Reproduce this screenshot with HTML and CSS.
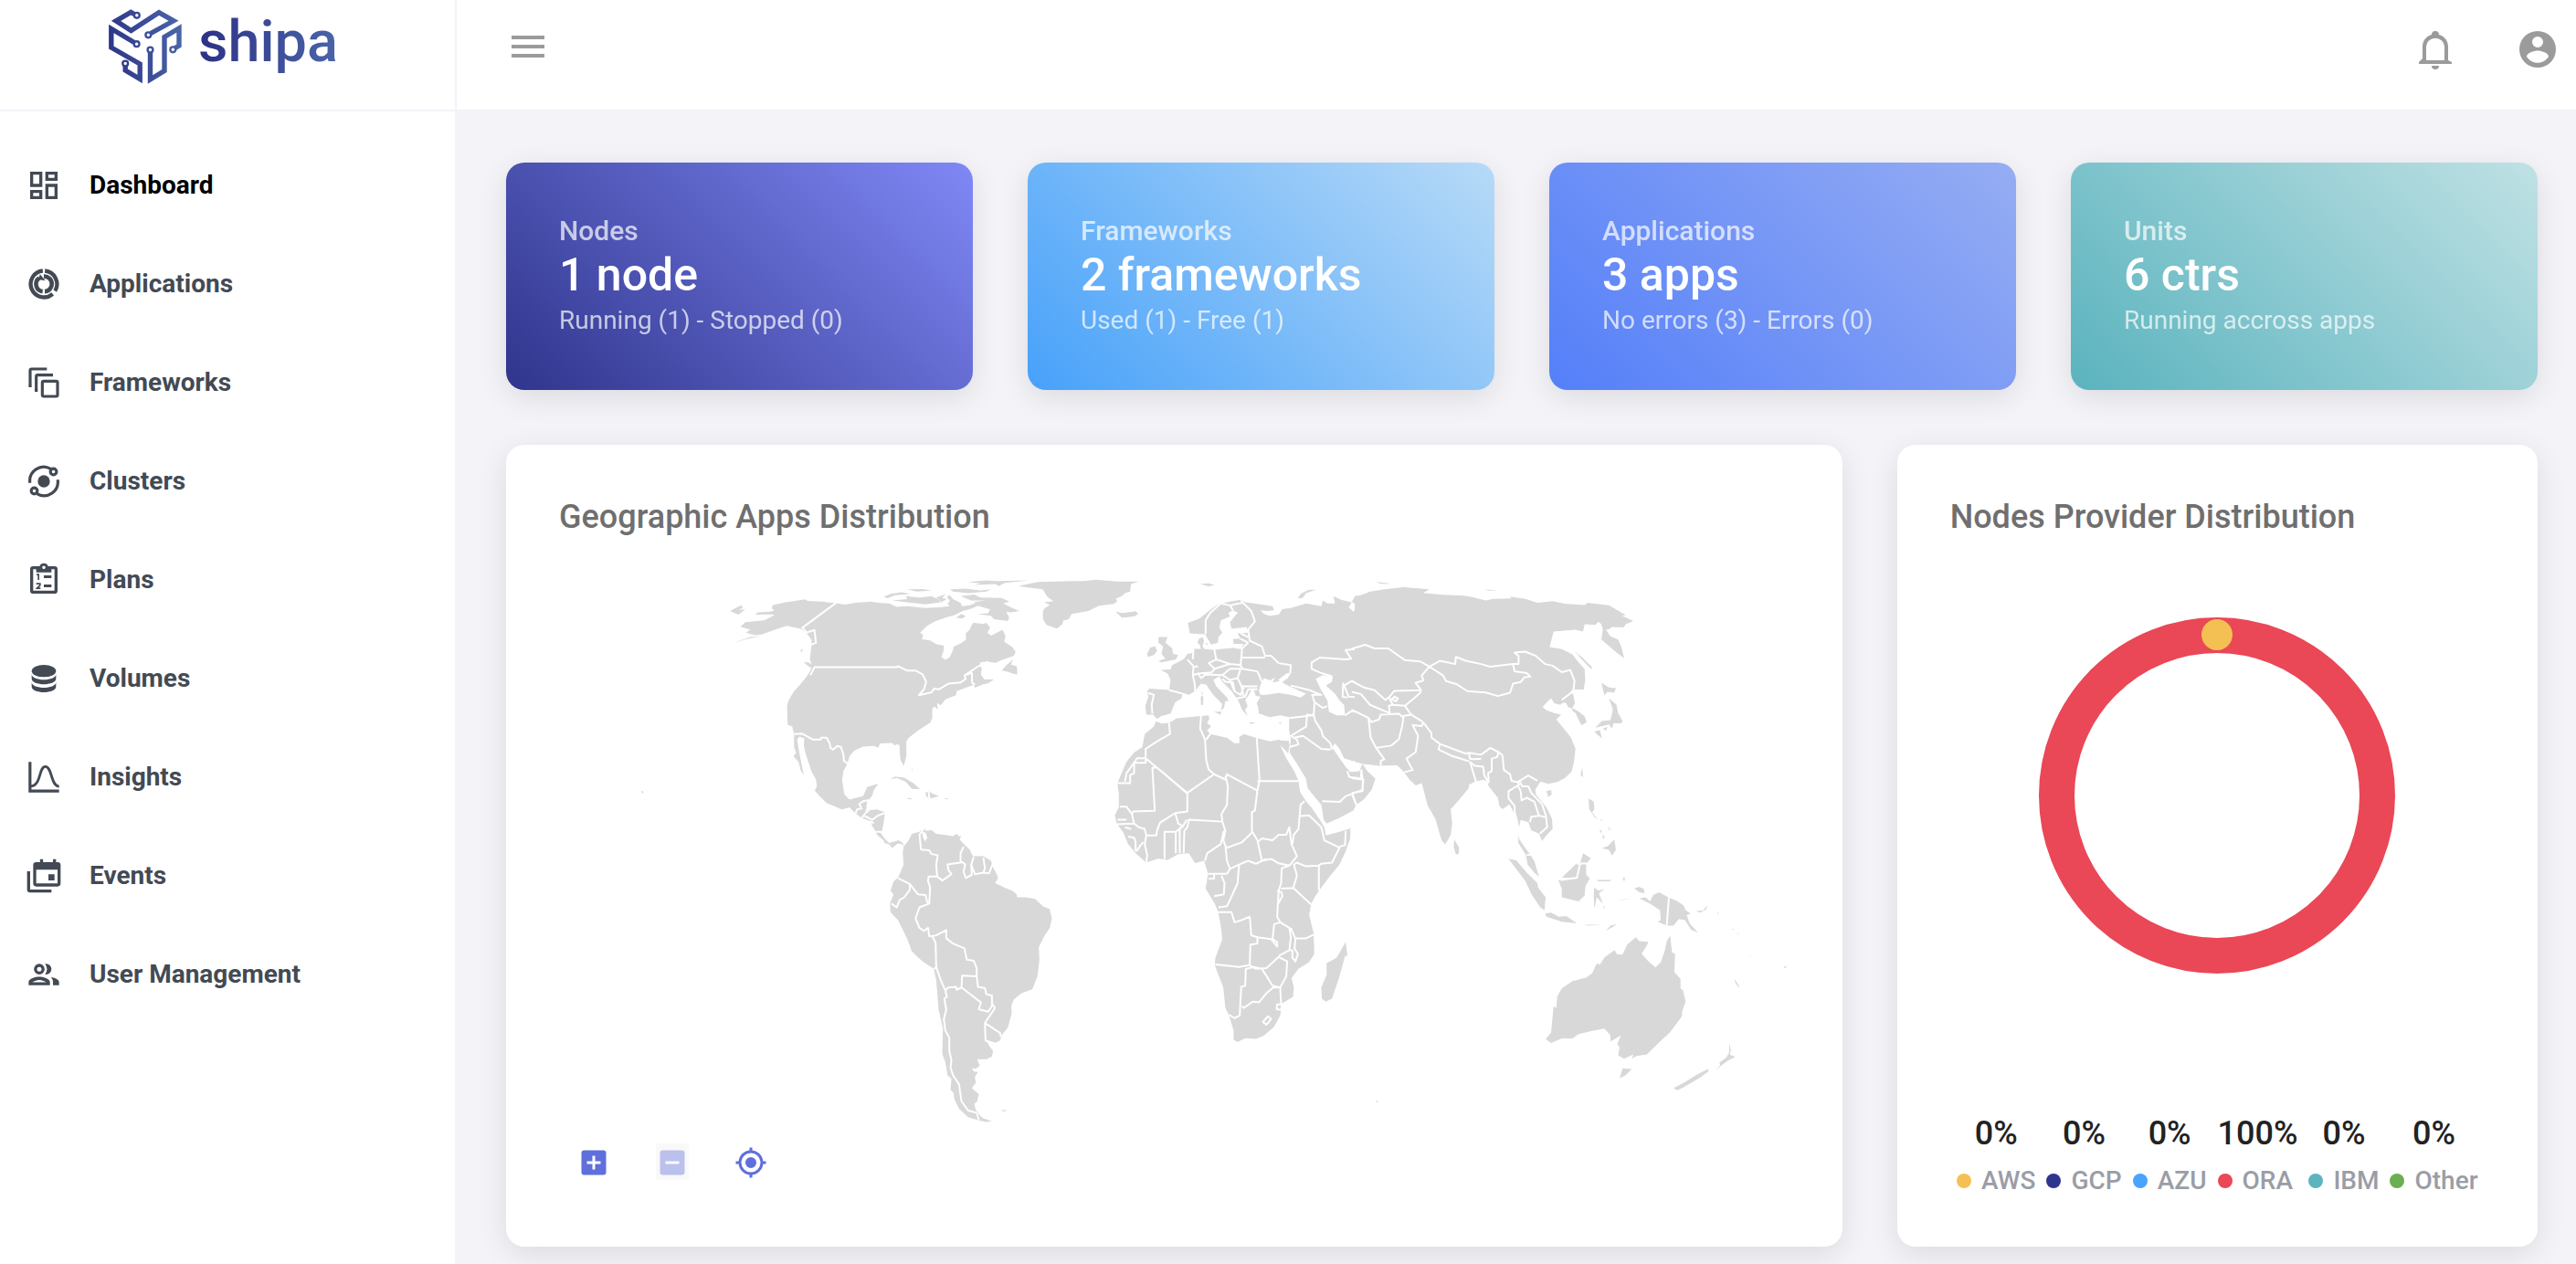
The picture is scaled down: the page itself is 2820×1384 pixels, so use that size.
FILE: index.html
```html
<!DOCTYPE html>
<html lang="en">
<head>
<meta charset="utf-8">
<meta name="viewport" content="width=device-width, initial-scale=1">
<title>Shipa Dashboard</title>
<link rel="stylesheet" href="styles.css">
</head>
<body>
<div class="app">
  <aside class="sidebar">
    <a class="brand" href="#">
      <svg class="brand-mark" viewBox="0 0 80 82" aria-hidden="true">
        <defs><linearGradient id="brand" gradientUnits="userSpaceOnUse" x1="0" y1="40" x2="80" y2="30"><stop offset="0" stop-color="#2e3589"/><stop offset="1" stop-color="#4a65a8"/></linearGradient></defs>
        <g fill="none" stroke="url(#brand)" stroke-width="5.4" stroke-miterlimit="8">
          <path d="M29 6L24.300 3.300L8 12.800L24.500 23.500L55 3.700L71 12.800L46 26.500"/>
          <path d="M28 36.500L2.800 21.500V42L34.200 60V76.500L18.200 67V62"/>
          <path d="M45.500 47V77L61 67.500V30.500L77 21V40L72 43"/>
          <g stroke-width="2.400" fill="#fff"><circle cx="30.800" cy="6.800" r="2.900"/><circle cx="43.300" cy="28.300" r="2.900"/><circle cx="30.600" cy="38.200" r="2.900"/><circle cx="18.200" cy="59.500" r="2.900"/><circle cx="45.500" cy="44.500" r="2.900"/><circle cx="70.300" cy="44.300" r="2.900"/></g>
        </g>
      </svg>
      <span class="brand-name">shipa</span>
    </a>
    <nav class="nav">
      <a class="nav-link active" href="#"><svg class="nav-icon" viewBox="0 0 24 24"><path d="M19 5v2h-4V5h4M9 5v6H5V5h4m10 8v6h-4v-6h4M9 17v2H5v-2h4M21 3h-8v6h8V3zM11 3H3v10h8V3zm10 8h-8v10h8V11zm-10 4H3v6h8v-6z"/></svg>Dashboard</a>
      <a class="nav-link" href="#"><svg class="nav-icon" viewBox="0 0 24 24"><g fill="none" stroke="currentColor"><path stroke-width="2.600" d="M11.300 3.300A8.700 8.700 0 1 0 17.800 18.500M19.300 16.500A8.700 8.700 0 0 0 12.700 3.300"/><path stroke-width="2.800" d="M9 8A4.900 4.900 0 0 0 11.200 16.900M12.600 16.900A4.900 4.900 0 0 0 12 7"/></g><path d="M9.500 5.500L13 9.700 8.300 9z"/></svg>Applications</a>
      <a class="nav-link" href="#"><svg class="nav-icon" viewBox="0 0 24 24"><g fill="none" stroke="currentColor" stroke-width="1.900"><rect x="11" y="11" width="10" height="10" rx="1"/><path d="M14 3H4Q3 3 3 4V14M18 7H8Q7 7 7 8V18M2 14H4M6 17H8"/></g></svg>Frameworks</a>
      <a class="nav-link" href="#"><svg class="nav-icon" viewBox="0 0 24 24"><circle cx="12" cy="12" r="4"/><g fill="none" stroke="currentColor" stroke-width="1.900"><path d="M2.900 13A9.100 9.100 0 0 1 16.500 3.800M21.100 11A9.100 9.100 0 0 1 7.500 20.200"/><circle cx="18.300" cy="5.700" r="2"/><circle cx="5.700" cy="18.300" r="2"/></g></svg>Clusters</a>
      <a class="nav-link" href="#"><svg class="nav-icon" viewBox="0 0 24 24"><path d="M19 3h-4.200a3 3 0 0 0-5.600 0H5a2 2 0 0 0-2 2v14a2 2 0 0 0 2 2h14a2 2 0 0 0 2-2V5a2 2 0 0 0-2-2zm-7-.300a1.100 1.100 0 1 1 0 2.200 1.100 1.100 0 0 1 0-2.200zM19 19H5V5h2v2h10V5h2v14zM12 9h5v1.800h-5zm0 6h5v1.800h-5z"/><path fill="none" stroke="currentColor" d="M7.200 8.500H8.500V12M7 14.500H9.500V15.500L7.500 17.500H9.800"/></svg>Plans</a>
      <a class="nav-link" href="#"><svg class="nav-icon" viewBox="0 0 24 24"><ellipse cx="12" cy="7" rx="8" ry="4"/><path d="M4 9v3c0 5 16 5 16 0V9c0 5-16 5-16 0zM4 14.200v3c0 5 16 5 16 0v-3c0 5-16 5-16 0z"/></svg>Volumes</a>
      <a class="nav-link" href="#"><svg class="nav-icon" viewBox="0 0 24 24"><g fill="none" stroke="currentColor" stroke-width="1.900"><path d="M2.900 2V21.100H22"/><path stroke-width="1.700" d="M3 18C10.500 18 8.500 5 13 5S16.500 18 22 18"/></g></svg>Insights</a>
      <a class="nav-link" href="#"><svg class="nav-icon" viewBox="0 0 24 24"><path d="M21 3h-1V1h-2v2h-6.500V1h-2v2H7a2 2 0 0 0-2 2v12a2 2 0 0 0 2 2h14a2 2 0 0 0 2-2V5a2 2 0 0 0-2-2zm0 14H7V8h14v9zM15 11h4v4h-4zM3 9H1v12a2 2 0 0 0 2 2h14v-2H3z"/></svg>Events</a>
      <a class="nav-link" href="#"><svg class="nav-icon" viewBox="0 0 24 24"><path fill-rule="evenodd" d="M9 12a3.500 3.500 0 1 0 0-7 3.500 3.500 0 0 0 0 7zm0-5a1.500 1.500 0 1 1 0 3 1.500 1.500 0 0 1 0-3zM9 13.500c-2.300 0-7 1.200-7 3.500V19h14v-2c0-2.300-4.700-3.500-7-3.500zM4.400 17.100C5.200 16.500 7.200 15.600 9 15.600s3.800.900 4.600 1.500zM13.500 12a3.500 3.500 0 0 0 0-7l-.700.100a5.600 5.600 0 0 1 0 6.800zM16.500 13.800c1 .800 1.500 1.800 1.500 3.200v2h4v-2c0-1.800-3-2.900-5.500-3.200z"/></svg>User Management</a>
    </nav>
  </aside>

  <div class="content">
    <header class="topbar">
      <button class="icon-button" aria-label="Toggle menu"><svg viewBox="0 0 24 24"><path d="M3 18h18v-2H3v2zm0-5h18v-2H3v2zm0-7v2h18V6H3z"/></svg></button>
      <div class="topbar-actions">
        <button class="icon-button" aria-label="Notifications"><svg viewBox="0 0 24 24"><path d="M10 21a2 2 0 0 0 4 0zM19 18v-7.500c0-3.200-2-5.700-5-6.500a2 2 0 0 0-4 0c-3 .800-5 3.300-5 6.500V17l-2 2v1h18v-1zm-2 0H7v-7.500a5 4.600 0 0 1 10 0z"/></svg></button>
        <button class="icon-button" aria-label="Account"><svg viewBox="0 0 24 24"><path d="M12 2a10 10 0 1 0 0 20 10 10 0 0 0 0-20zm0 3a3 3 0 1 1 0 6 3 3 0 0 1 0-6zm0 14.400c-2.500 0-4.700-1.300-6-3.400 0-2 4-3.200 6-3.200s6 1.200 6 3.200c-1.300 2.100-3.500 3.400-6 3.400z"/></svg></button>
      </div>
    </header>

    <main class="grid">
      <section class="card stat stat-nodes"><h2 class="stat-label">Nodes</h2><p class="stat-value">1 node</p><p class="stat-note">Running (1) - Stopped (0)</p></section>
      <section class="card stat stat-frameworks"><h2 class="stat-label">Frameworks</h2><p class="stat-value">2 frameworks</p><p class="stat-note">Used (1) - Free (1)</p></section>
      <section class="card stat stat-apps"><h2 class="stat-label">Applications</h2><p class="stat-value">3 apps</p><p class="stat-note">No errors (3) - Errors (0)</p></section>
      <section class="card stat stat-units"><h2 class="stat-label">Units</h2><p class="stat-value">6 ctrs</p><p class="stat-note">Running accross apps</p></section>

      <section class="card map-card">
        <h2 class="card-title">Geographic Apps Distribution</h2>
        <svg class="map" viewBox="0 0 1347 640" role="img" aria-label="World map">
          <!-- Americas and Greenland -->
          <g transform="translate(168 20) scale(.33333 .40833)">
            <path class="land" d="M92 162L108 150 170 145 188 138 205 130 185 129 140 130 150 124 190 122 203 119 195 113 198 104 240 97 305 89 312 93 360 95 405 99 435 103 470 98 520 95 545 98 580 100 605 109 640 107 700 112 745 110 780 107 772 101 780 93 770 82 779 77 790 88 815 98 820 107 845 105 860 100 872 106 850 114 822 120 795 131 765 138 730 148 705 160 682 178 692 184 688 196 715 199 735 209 760 213 760 225 752 243 765 251 780 243 790 225 792 216 815 207 833 197 832 180 845 170 850 160 857 151 890 155 900 152 912 165 903 178 915 186 953 170 963 188 958 202 985 217 996 230 990 240 950 252 930 259 905 256 880 257 878 268 885 272 882 290 893 304 922 303 905 312 862 326 858 318 845 322 802 335 800 346 765 357 750 373 738 367 740 385 730 376 722 382 722 408 715 420 680 438 645 460 637 470 637 510 628 536 618 520 615 500 615 482 610 477 598 480 590 474 550 475 545 487 530 482 495 484 465 495 450 510 443 530 430 550 426 575 433 612 450 626 495 617 508 592 545 583 530 600 525 615 510 630 508 648 500 656 540 652 567 660 562 690 556 712 548 710 565 730 580 742 612 735 625 742 628 752 620 745 608 744 590 756 580 746 565 742 562 735 540 720 537 712 525 697 520 684 490 675 470 663 450 647 425 652 375 635 350 615 336 602 343 590 340 572 325 550 315 525 305 500 300 480 302 462 285 457 278 465 283 490 290 520 300 560 290 548 283 525 266 510 275 500 268 485 268 452 262 430 247 425 245 375 250 360 268 335 285 320 310 295 322 280 325 262 320 250 325 215 325 197 310 180 290 168 245 160 225 165 160 183 140 185 110 178 125 170Z
            M58 120L95 104 100 112 85 117 108 116 85 130ZM68 205L125 190 158 187 110 196ZM190 165L225 157 222 162 178 176ZM300 258L315 258 338 270 330 275 315 268ZM562 82L585 74 620 70 652 74 600 78 575 86ZM590 92L640 88 635 80 680 84 720 80 740 88 750 97 700 102 640 97ZM640 62L690 61 720 65 670 68ZM735 84L765 75 755 85 770 88 752 96ZM780 62L830 60 880 65 915 62 900 68 840 72 790 68ZM815 80L860 76 880 84 950 85 975 95 955 100 985 112 1008 120 980 124 965 122 975 138 970 147 925 142 915 133 885 130 870 128 905 126 912 116 880 108 865 105 860 96 895 92 850 92ZM838 42L880 46 860 50 930 48 940 53 960 45 1040 38 930 40 900 38ZM800 138L818 128 832 134 820 140ZM950 280L965 266 988 250 980 264 1000 268 1002 290 985 288 970 283ZM870 320L895 308 925 303 905 314ZM1010 54L1035 57 1085 62 1100 82 1120 94 1090 97 1108 104 1092 112 1085 122 1086 142 1098 158 1132 167 1150 155 1152 146 1170 142 1180 128 1235 120 1270 106 1318 101 1330 94 1325 87 1345 80 1355 72 1372 68 1375 48 1400 41 1330 41 1260 36 1220 40 1180 40 1070 42 1010 52ZM1325 122L1345 126 1390 121 1398 128 1385 134 1345 138Z
            M582 572L600 564 630 567 660 582 682 598 655 597 635 578 605 568ZM700 607L712 604 722 610 745 616 720 622 702 618ZM636 623L650 621 655 626ZM760 622L775 622 770 625ZM288 227L297 222 294 231ZM948 1459L968 1459 958 1463ZM655 540L658 547 655 548Z
            M628 752L645 735 655 718 680 712 698 700 700 710 720 708 735 718 760 720 790 724 802 718 812 725 818 720 812 733 825 745 845 760 855 778 890 778 915 790 920 805 935 828 938 838 928 850 950 858 960 862 985 870 1000 880 1000 888 1030 888 1060 892 1085 912 1108 920 1115 945 1108 970 1090 992 1072 1022 1074 1055 1068 1098 1058 1120 1050 1135 1015 1145 990 1162 982 1178 983 1200 970 1238 950 1258 945 1272 930 1278 900 1270 910 1288 922 1300 918 1315 900 1322 870 1322 878 1340 865 1348 852 1347 860 1356 872 1356 862 1370 865 1385 852 1400 875 1416 870 1435 860 1442 865 1458 880 1475 905 1492 870 1485 840 1478 810 1455 795 1430 792 1412 782 1405 785 1375 772 1365 765 1330 755 1308 757 1240 743 1190 735 1110 727 1080 690 1060 655 1033 640 1000 610 950 585 928 583 905 595 880 585 870 595 845 610 835 628 800 625 770ZM880 1478L918 1489 900 1490Z"/>
            <path class="water" d="M688 712L692 728 698 738 706 728 700 715Z"/>
            <path class="border" d="M405 99L295 165 310 178 335 171 340 205 320 212M322 292L335 271 605 271 610 268 640 280 668 280 690 290 702 310 695 330 678 346 720 338 728 328 745 330 775 315 815 312 832 302 828 293 852 286 853 312 862 318M828 293L870 270 905 256M268 450L295 449 330 465 355 465 357 460 375 460 385 475 388 488 397 492 410 482 422 485 430 505 432 522 445 530M470 663L475 652 490 650 482 638 495 630 512 628 508 648M490 675L505 660 515 655M500 670L525 680 545 668 567 662M530 690L520 684M537 712L556 712M698 700L680 720 685 760 712 762 720 772 740 775 735 800 738 832 710 832 708 845 715 860 712 905 705 900 700 882 675 880 648 852 610 837M738 832L755 843 785 826 775 815 772 800 815 795 815 770 825 752M815 790L830 800 825 820 832 836 852 828 850 800 858 780M850 800L862 826 890 822 895 810 890 782M890 822L908 824 920 800M648 852L648 868 630 888 615 895 605 915 588 905M712 905L680 915 667 945 680 970 695 978 708 970 712 992 722 992 735 990 768 976 768 998 790 1012 828 1025 835 1055 858 1058 868 1078 868 1100 820 1098 818 1130 882 1170 875 1188 905 1195 918 1180 918 1152 900 1148 895 1132 872 1128 868 1100M722 992L733 1010 735 1075 750 1110 765 1138 775 1130 800 1128 802 1136 818 1130M918 1172L928 1185 895 1225 945 1252 947 1262M895 1225L897 1272 912 1280M765 1138L770 1155 762 1160 768 1190 760 1215 765 1245 778 1265 778 1300 785 1325 782 1345 790 1365 810 1390 818 1435 840 1460 868 1466M735 1075L727 1080M868 1466L875 1485M710 604L712 620"/>
          </g>
          <!-- Africa, Europe and the Middle East -->
          <g transform="translate(588 20) scale(.33333 .40833)">
            <path class="land" d="M197 416L215 422 240 420 265 408 345 402 370 400 372 410 365 420 378 430 365 440 375 450 430 460 455 475 472 474 470 458 485 450 525 460 570 470 605 465 632 466 636 480 631 502 618 490 605 480 625 515 650 548 665 575 670 605 690 630 710 650 735 680 750 700 755 722 800 712 836 703 835 730 820 765 800 800 765 835 735 868 720 885 707 905 700 935 715 985 717 1040 700 1062 665 1080 642 1105 650 1130 647 1155 612 1172 605 1205 585 1235 550 1260 525 1268 490 1266 465 1276 452 1270 452 1245 437 1205 425 1185 418 1130 390 1070 392 1050 415 1000 408 955 400 925 390 905 360 865 365 840 368 825 355 790 325 796 305 770 270 772 235 788 205 784 165 795 130 770 105 745 90 715 68 690 62 668 75 645 75 610 70 582 100 525 125 500 152 485 160 450 190 430ZM820 1008L826 1045 818 1045 800 1100 775 1160 755 1168 742 1160 740 1130 758 1095 757 1065 790 1050Z
            M165 398L162 375 172 350 168 335 175 328 240 332 245 305 235 288 213 278 245 277 250 265 275 255 290 248 300 235 320 232 320 222 345 222 340 210 333 205 338 195 350 190 355 200 350 215 355 222 385 224 440 220 455 218 475 220 485 208 452 208 450 195 475 195 465 180 500 178 495 163 445 168 440 150 460 130 467 125 450 118 435 125 440 135 410 145 405 165 415 178 402 190 400 205 378 210 358 182 340 182 308 180 302 152 340 140 370 120 400 102 440 95 475 90 490 97 520 100 580 107 585 118 560 120 540 118 552 128 570 133 600 130 612 115 640 112 690 100 740 107 745 92 760 100 785 100 780 80 805 90 840 97 830 110 845 122 862 108 840 95 850 82 880 75 900 68 950 62 1020 55 1020 558 990 534 930 535 900 532 880 525 862 515 845 523 815 515 800 490 785 475 775 485 800 515 822 540 835 552 865 550 875 530 890 548 918 570 905 600 880 625 855 640 845 655 800 675 757 690 748 680 743 655 740 640 695 595 690 570 660 530 636 500 640 465 634 440 635 405 605 400 570 405 535 395 530 365 540 350 525 348 515 325 500 348 490 358 498 375 490 385 498 402 480 385 468 362 458 350 445 335 415 310 405 295 385 305 395 322 430 352 435 362 425 362 420 380 410 388 415 370 385 345 362 318 345 315 325 335 305 345 285 340 280 355 260 365 245 395 215 402 200 410 188 398Z
            M205 190L235 190 228 205 250 220 253 235 270 238 262 250 215 258 205 254 228 248 215 235 220 215 205 205ZM168 235L178 218 195 215 200 228 190 238 170 243ZM65 122L85 126 130 121 138 128 125 134 85 138ZM342 47L370 46 390 50 370 54 355 50ZM662 85L675 72 700 63 722 63 690 72 678 86ZM388 390L412 390 408 398ZM344 350L352 348 352 372 345 372ZM346 335L351 340 349 347ZM500 418L525 420 510 423ZM600 420L610 418 605 424ZM360 205L368 208 363 212ZM528 365L540 360 530 375ZM918 1435L928 1433 922 1438ZM920 42L970 47 940 47Z"/>
            <path class="water" d="M540 318L552 300 572 306 588 298 580 312 605 308 625 318 670 335 690 342 672 352 640 345 600 340 560 345 540 345 535 335ZM598 305L625 288 642 284 630 300 610 312ZM722 302L745 292 778 295 775 310 755 320 785 342 800 360 815 372 818 400 790 400 765 390 760 360 738 330Z"/>
            <path class="border" d="M240 420L243 450 200 470 163 490 163 515M70 582H112V560L125 555V527H163V515H135L100 555 95 578M345 402L342 435 358 465 362 520 370 545 388 558 300 608 163 515M185 540H200L300 610 300 658 260 662 235 675 210 688 200 710 198 722 165 722 160 705 140 700 125 690 68 692M185 540L193 656 122 658 118 665 125 690M118 665L100 645 78 645M70 680H100M375 450L362 465M388 558L425 572 430 558 530 602 537 575 528 460M530 576H665M425 562L433 590 430 640 412 665 415 685 305 680 300 700 290 710 288 770M530 602L522 655 512 660 512 710 530 735 545 790 575 785 600 797 635 803M415 685L425 710 418 735 425 750 430 755 480 740 515 712M260 662L270 690 285 698 298 680M225 785V712H262L285 698M262 712V770M275 700V770M165 795L168 775 160 745 165 722M105 725L125 728 130 740 130 765M155 740L145 750 133 765M95 700L115 705M420 710L410 745 365 770 358 790M425 750L430 790 440 812 430 825H368M388 825V838H370M440 812L470 800 500 790 525 798 560 785M470 800L465 850 440 895 430 912 402 915M412 830L422 850 420 880 388 885M400 928H445L455 955 475 950 505 940 510 990 530 995 530 1012 507 1015 505 1070 470 1075 392 1068M530 995L575 1000 595 1020 595 1008 580 1000 585 960 605 955M505 1070L525 1080 560 1078 600 1048 628 1060 625 1100 605 1130 580 1125 545 1080 520 1075 492 1080 490 1125 477 1128 472 1205 455 1212 437 1203M480 1180L485 1185 515 1168 535 1170 560 1145 582 1130 605 1130 608 1175 595 1175 593 1188 608 1190 612 1172M548 1222L565 1207 575 1215 560 1230ZM635 803L610 810 608 850 600 870 595 940 605 955 635 970 640 995 635 1030 600 1045 M640 970L655 1000 652 1025 663 1040 655 1060 645 1050 645 1030 635 1030M655 998L690 998 715 988M608 865L648 863 708 908M648 863L660 830 650 800 660 795 690 805 730 803 740 798 775 795 800 755 750 735 740 700M732 870V803M635 803L660 778 642 745 635 700 625 720 600 720 580 735 545 730 530 740M645 745L650 720 665 705 672 640 685 630M672 670L700 668 740 700M800 752L818 748 820 710M595 870L610 875 612 885 595 910M605 465L632 466M743 630L800 632 820 617 875 600 877 570 832 565 825 550M843 612L855 640M870 570L872 545M636 485L665 478 660 465 640 455 690 430 693 402 635 407M650 460L680 455 740 490 770 492M693 402L715 398 720 415 740 440 745 455 770 475 775 492M530 330H500L490 350 460 355M700 332L740 345 710 345 718 365 715 400 690 398M718 365L745 380 760 375M640 320L700 332M818 400L840 388 865 395 895 412 905 450 915 485 945 515 935 535M915 485H975L1000 455 1008 410 985 395 965 400 955 395M895 412L960 400 955 390 910 375 880 352 830 350 815 320 840 308 880 325 935 335 965 365M812 312L810 350 825 352M775 295L735 285 708 275 708 258 735 245 820 250 838 248 820 225 860 222 890 210 940 222 965 218 1020 250M965 365L985 340 1020 345M965 365L1020 372M475 92L510 120 522 148 500 170 505 200 545 215 555 240 575 240 600 260 640 265 638 285M360 182V145L375 125 410 100 440 105 450 118M440 105L480 98M455 218L480 220 500 205M475 195L500 205M475 180L500 190M480 220L475 265 440 262 395 250 388 222M480 245H555M475 265L480 275 530 282 545 310M395 250L370 260 390 275 380 285 335 288M390 275L440 262M335 288L318 292 325 320 325 335M318 292L320 270 335 268 M300 250L320 268M320 222L318 250M335 288L345 300 360 290 415 292 440 275 475 275M415 292L440 305 465 300 475 275M465 300L478 322 530 322M415 302L425 310 450 312 455 335 475 345 485 325M440 305L455 335M240 332L285 342M172 340L190 345 183 370 185 395M478 322L485 350"/>
          </g>
          <!-- Asia and Australia -->
          <g transform="translate(868 20) scale(.33333 .35714)">
            <path class="land" d="M10 90L40 92 60 82 100 72 180 65 255 71 235 82 290 87 370 90 400 95 440 105 465 100 525 99 520 93 570 100 610 112 660 107 700 115 765 119 775 112 845 120 900 150 888 152 925 168 900 178 893 188 855 186 845 193 835 195 850 215 875 225 885 245 895 282 870 265 820 225 825 195 820 178 810 170 800 180 765 178 760 200 735 195 663 200 650 248 690 254 725 270 745 295 765 315 767 350 762 378 735 378 728 395 733 420 725 435 745 445 765 460 772 478 755 487 745 470 735 450 712 435 705 420 695 418 685 425 665 420 655 405 640 418 627 432 640 442 665 450 688 455 672 470 690 490 720 525 735 560 730 600 722 630 700 650 675 662 645 667 620 660 603 685 605 700 640 740 658 775 660 805 640 825 625 842 615 820 590 810 580 785 555 778 548 810 550 835 565 858 585 882 600 905 615 952 600 940 578 915 572 885 547 848 550 800 535 760 518 730 495 745 485 735 480 710 450 675 445 660 432 655 405 660 385 670 385 680 345 725 325 745 330 790 325 825 307 853 295 840 275 775 250 735 230 665 210 672 190 655 172 632 150 610 45 608 10 600ZM337 838L352 862 352 882 342 884 335 860ZM640 690L655 686 657 700 645 707ZM752 640L757 618 760 648ZM732 260L760 282 790 310 786 315 755 285ZM80 49L125 53 95 53ZM436 71L482 75 450 75ZM820 357L845 372 868 374 862 388 840 385 830 396ZM845 405L870 425 875 450 890 475 885 482 860 482 855 497 845 485 800 495 822 475 850 472 858 440ZM797 507L815 503 822 528 805 515ZM825 498L840 493 835 505ZM778 712L795 722 797 745 790 755 805 773 825 778 800 772 780 745ZM815 805L820 812 817 818ZM840 795L850 805ZM825 820L830 832 825 835ZM838 780L825 770ZM822 865L842 858 862 838 868 870 855 888 845 870ZM515 897L540 902 575 940 610 972 612 985 637 1015 633 1055 618 1045 590 1005 570 965ZM635 1065L655 1062 680 1075 705 1073 740 1095 690 1090 640 1075ZM677 958L690 962 742 955 750 912 760 880 785 895 770 915 770 945 782 958 768 980 765 1010 745 1028 690 1015 690 990ZM690 955L740 910 748 912 738 955ZM797 985L810 995 830 990 812 1003 825 1035 805 1015 797 1050 795 1010ZM805 962L855 962 845 966 810 966ZM890 955L898 955 895 968ZM760 1100L820 1098 780 1102ZM835 1118L850 1102 872 1098ZM875 1023L915 1020 895 1023ZM928 988L945 983 960 990 962 1003 945 1000ZM945 1018L965 1015 980 1028 990 1008 1010 1000 1040 1015 1065 1025 1090 1040 1097 1055 1113 1065 1100 1070 1110 1095 1138 1124 1115 1115 1095 1085 1075 1082 1057 1102 1035 1102 1005 1090 1015 1085 1013 1055 980 1035ZM1130 1058L1155 1055 1168 1040 1165 1052 1145 1062ZM785 1110L797 1118Z
            M933 1138L945 1150 975 1152 965 1170 952 1188 975 1212 998 1230 1015 1215 1028 1180 1035 1150 1046 1133 1052 1185 1062 1188 1060 1245 1080 1265 1080 1295 1088 1300 1097 1335 1085 1365 1085 1380 1045 1430 1010 1460 970 1497 935 1502 920 1510 925 1497 895 1510 875 1500 880 1475 872 1465 885 1438 850 1458 850 1438 830 1418 790 1425 745 1435 725 1448 690 1448 655 1462 637 1450 655 1430 663 1350 672 1355 675 1320 690 1295 725 1272 770 1262 790 1248 805 1218 815 1222 830 1200 863 1177 872 1190 890 1190 905 1160Z"/>
            <path class="border" d="M0 253L45 241 75 252 120 252 175 288 225 292 255 308 230 335 235 350 210 358 228 380 140 382 122 402 110 410 75 380 40 372 0 352M140 400L152 405 145 414 132 408ZM122 402L135 425 175 428 205 405 228 385M0 385L30 392 60 425 110 445 125 450 122 428 135 425M0 440L55 465 65 478 90 470 95 455 155 452 170 465 165 492 155 530 130 550 80 557 62 525 55 465M80 557L107 592 95 597V610M175 428L195 455 165 460M195 455L230 475 240 485 262 512 262 525 290 545 375 575 385 572 425 578 455 557 482 570 495 580 500 625 520 638 525 658 545 662 580 642 610 658M235 480L230 490 200 487 218 520 210 570 180 590 200 625 172 632M290 545L285 562 330 582 385 598M385 572L388 590 400 592 425 590M388 598L408 660M388 600L405 612 432 615 435 640 450 665M482 570L478 585 460 590 460 628 448 635 450 665M255 308L290 290 340 300 342 278 375 290 425 300 455 308 530 300 548 300 548 275 535 265 570 262 605 275 635 300 660 305 690 325 718 318 732 352 728 380 718 390 690 410M255 308L300 335 310 352 345 362 380 383 440 387 480 398 520 388 530 360 555 355 568 340 587 338 575 328 535 322 530 300M735 378L725 392M710 435L725 440M545 662L550 670 515 690 515 712 535 735 535 752 545 790 552 830M550 655L560 675 580 675 590 695 625 730 638 765 642 800 618 820M545 672L555 690 558 718 575 710 600 722 615 765 590 768 585 785M615 765L640 770M575 885L590 885M677 958L690 962 740 955 750 912 775 912M740 905L742 915M1042 1015L1035 1102M0 695L35 690 38 655 0 650M15 732L2 702M35 650L32 625"/>
          </g>
          <g transform="translate(1028 220) scale(.33333)">
            <path class="land" d="M410 1050L440 1052 420 1072 400 1083ZM577 1115L615 1095 655 1070 690 1052 692 1060 660 1083 610 1112 590 1122ZM760 968L765 990 762 1005 780 1012 755 1025 715 1055 730 1040 728 1030 750 1015 760 998ZM777 756L793 780 790 783 780 768ZM938 716L950 715 942 722ZM720 532L728 546 723 542ZM768 591L776 592 772 595ZM788 605L792 607 788 609ZM828 678L831 679 829 682ZM337 268L342 272 336 277ZM344 290L350 284 349 298ZM338 230L345 236 338 236ZM362 255L370 265 366 268ZM348 515L352 524 347 523Z"/>
          </g>
          <path class="land" d="M90 266L93 267 91 269Z"/>
        </svg>
        <div class="map-controls">
          <button class="map-button" aria-label="Zoom in"><svg viewBox="0 0 24 24"><path d="M19 3H5a2 2 0 0 0-2 2v14a2 2 0 0 0 2 2h14a2 2 0 0 0 2-2V5a2 2 0 0 0-2-2zm-2 10h-4v4h-2v-4H7v-2h4V7h2v4h4z"/></svg></button>
          <button class="map-button" aria-label="Zoom out" disabled><svg viewBox="0 0 24 24"><path d="M19 3H5a2 2 0 0 0-2 2v14a2 2 0 0 0 2 2h14a2 2 0 0 0 2-2V5a2 2 0 0 0-2-2zm-2 10H7v-2h10z"/></svg></button>
          <button class="map-button" aria-label="Center map"><svg viewBox="0 0 24 24"><path d="M12 8a4 4 0 1 1 0 8 4 4 0 0 1 0-8M3.050 13H1V11H3.050C3.500 6.830 6.830 3.500 11 3.050V1H13V3.050C17.170 3.500 20.500 6.830 20.950 11H23V13H20.950C20.500 17.170 17.170 20.500 13 20.950V23H11V20.950C6.830 20.500 3.500 17.170 3.050 13M12 5a7 7 0 1 0 0 14 7 7 0 0 0 0-14z"/></svg></button>
        </div>
      </section>

      <section class="card provider-card">
        <h2 class="card-title">Nodes Provider Distribution</h2>
        <svg class="donut" viewBox="0 0 392 392" role="img" aria-label="ORA 100%">
          <circle cx="196" cy="196" r="175.500" fill="none" stroke="#ea4757" stroke-width="39"/>
          <circle cx="196" cy="20" r="17" fill="#f5c053"/>
        </svg>
        <ul class="legend">
          <li><strong>0%</strong><span class="provider aws">AWS</span></li>
          <li><strong>0%</strong><span class="provider gcp">GCP</span></li>
          <li><strong>0%</strong><span class="provider azu">AZU</span></li>
          <li><strong>100%</strong><span class="provider ora">ORA</span></li>
          <li><strong>0%</strong><span class="provider ibm">IBM</span></li>
          <li><strong>0%</strong><span class="provider other">Other</span></li>
        </ul>
      </section>
    </main>
  </div>
</div>
</body>
</html>
```
FILE: styles.css
```css
* { box-sizing: border-box; }

body {
  margin: 0;
  background: #f3f3f8;
  font-family: Roboto, "Liberation Sans", sans-serif;
  font-size: 28px;
  line-height: 36px;
}

h2, p, ul { margin: 0; padding: 0; }

svg { display: block; fill: currentColor; }

.app {
  display: grid;
  grid-template-columns: 500px minmax(0, 1fr);
  min-height: 100vh;
}

/* Sidebar */
.sidebar {
  background: #fff;
  border-right: 2px solid #f3f3f8;
}

.brand {
  display: flex;
  align-items: flex-start;
  gap: 18px;
  height: 122px;
  padding: 10px 0 0 119px;
  border-bottom: 2px solid #f3f3f8;
  text-decoration: none;
}

.brand-mark { width: 80px; height: 82px; }

.brand-name {
  color: transparent;
  background: linear-gradient(90deg, #2c3186, #4a65a8);
  -webkit-background-clip: text;
  background-clip: text;
  font-size: 63px;
  line-height: 72px;
  font-weight: 500;
}

.nav { padding-top: 27px; }

.nav-link {
  display: flex;
  align-items: center;
  gap: 30px;
  height: 108px;
  padding-left: 28px;
  color: #434a54;
  font-weight: 700;
  text-decoration: none;
}

.nav-link.active { color: #000; }

.nav-icon { width: 40px; height: 40px; color: #434a54; }

/* Top bar */
.topbar {
  display: flex;
  justify-content: space-between;
  height: 120px;
  padding: 27px 18px 0 54px;
  background: #fff;
}

.topbar-actions {
  display: flex;
  gap: 64px;
  padding-top: 3px;
}

button {
  padding: 0;
  border: 0;
  background: none;
}

.icon-button { width: 48px; height: 48px; color: #9b9b9b; }

/* Dashboard */
.grid {
  display: grid;
  grid-template-columns: repeat(12, minmax(0, 1fr));
  gap: 60px;
  padding: 58px 42px 19px 54px;
}

.card {
  padding: 57px 58px;
  border-radius: 20px;
  background: #fff;
  box-shadow: 0 8px 32px rgba(0, 0, 0, .1);
}

.stat { grid-column: span 3; min-height: 249px; color: #fff; }
.stat-nodes { background: linear-gradient(45deg, #2f358b, #8088f6); }
.stat-frameworks { background: linear-gradient(45deg, #47a1fa, #b7daf7); }
.stat-apps { background: linear-gradient(45deg, #547ff9, #96adf3); }
.stat-units { background: linear-gradient(45deg, #5ab3be, #bfe1e4); }

.stat-label { font-size: 30px; font-weight: 500; opacity: .7; }
.stat-value { font-size: 50px; line-height: 60px; font-weight: 500; }
.stat-note { margin-top: 2px; opacity: .7; }

.card-title {
  color: #6f6f6f;
  font-size: 36px;
  line-height: 44px;
  font-weight: 500;
}

.map-card { grid-column: span 8; padding-bottom: 73px; }

.map { width: 100%; height: auto; margin-top: 12px; }
.land { fill: #d8d8d8; }
.water { fill: #fff; }
.border {
  fill: none;
  stroke: #fff;
  stroke-width: 2px;
  stroke-linejoin: round;
  vector-effect: non-scaling-stroke;
}

.map-controls {
  display: flex;
  gap: 50px;
  margin-top: 12px;
  padding-left: 20px;
}

.map-button { width: 36px; height: 40px; padding-top: 3px; color: #5f6fdc; }
.map-button:disabled { background: #f9f9f9; }
.map-button:disabled svg { opacity: .4; }

.provider-card {
  display: flex;
  flex-direction: column;
  grid-column: span 4;
  padding-bottom: 46px;
}

.donut { width: 392px; max-width: 100%; height: auto; margin: 87px auto 0; }

.legend {
  display: flex;
  justify-content: center;
  gap: 12px;
  margin-top: auto;
  list-style: none;
}

.legend strong {
  display: block;
  color: #222;
  font-size: 36px;
  line-height: 52px;
  font-weight: 500;
  text-align: center;
}

.provider {
  display: flex;
  align-items: center;
  gap: 11px;
  color: #9a9da6;
  line-height: 52px;
  font-weight: 500;
}

.provider::before {
  content: "";
  width: 16px;
  height: 16px;
  border-radius: 50%;
  background: currentColor;
}

.aws::before { background: #f5c053; }
.gcp::before { background: #2f358f; }
.azu::before { background: #4aa3fc; }
.ora::before { background: #ea4757; }
.ibm::before { background: #5cb4bf; }
.other::before { background: #6cae52; }
```
